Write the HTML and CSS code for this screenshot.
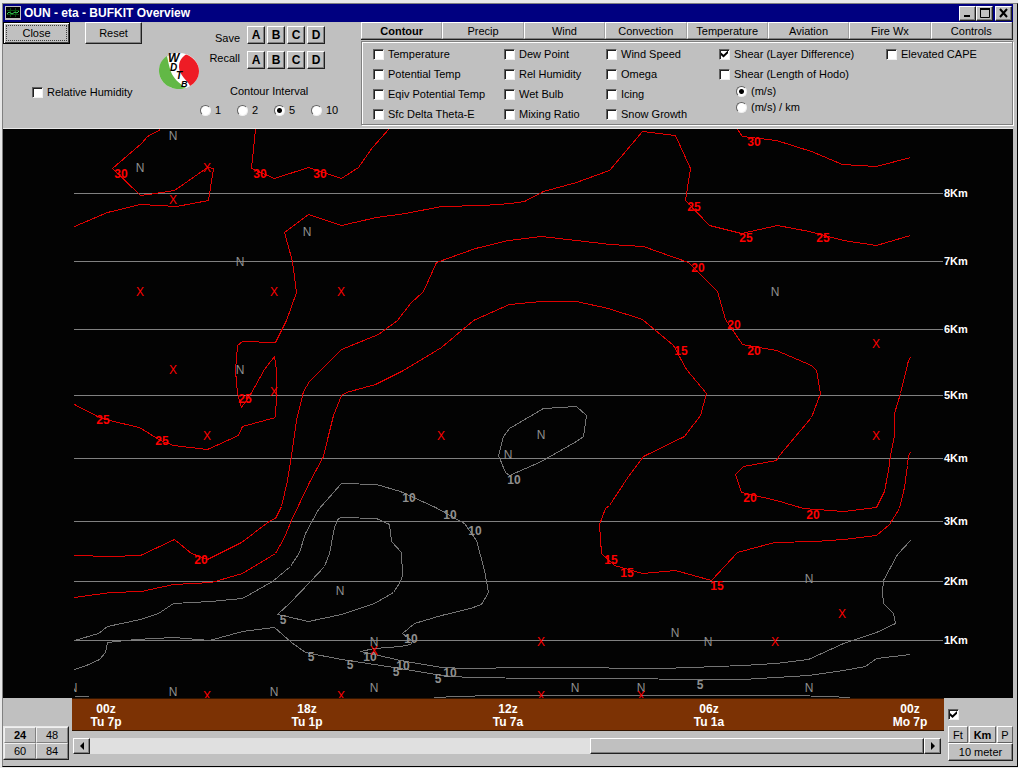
FILE: index.html
```html
<!DOCTYPE html>
<html lang="en">

<head>

  <meta charset="utf-8">

  <title>OUN - eta - BUFKIT Overview</title>

  <link rel="stylesheet" href="styles.css">
</head>

<body>

  <div class="window">
    <header class="titlebar">
      <svg class="app-icon" width="16" height="14" viewBox="0 0 16 14">
        <rect width="16" height="14" fill="#c0c0c0"></rect>
        <rect x="1" y="1" width="14" height="11" fill="#000"></rect>
        <path d="M2 4.5H14M2 8.5H14M5.5 2V11M10.5 2V11" stroke="#064a10" fill="none"></path>
        <path d="M2 8L4 6L7 8L10 6L12 7L14 5" stroke="#3ad45a" fill="none"></path>
      </svg>
      <h1>OUN - eta - BUFKIT Overview</h1>
      <div class="window-buttons">
        <button type="button" aria-label="Minimize">
          <svg width="12" height="10" viewBox="0 0 12 10"><path d="M2 8H8" stroke="#000" stroke-width="2"></path></svg>
        </button>
        <button type="button" aria-label="Maximize">
          <svg width="12" height="10" viewBox="0 0 12 10"><path d="M1.5 1V9.5H10.5V1M1 1H11" stroke="#000" stroke-width="1" fill="none"></path><path d="M1 1H11" stroke="#000" stroke-width="2"></path></svg>
        </button>
        <button type="button" class="close" aria-label="Close window">
          <svg width="12" height="10" viewBox="0 0 12 10"><path d="M2 1L9 9M9 1L2 9" stroke="#000" stroke-width="2"></path></svg>
        </button>
      </div>
    </header>

    <section class="toolbar">
      <div class="actions">
        <div class="main-buttons">
          <button type="button" class="default">Close</button>
          <button type="button">Reset</button>
        </div>
        <label class="humidity"><input type="checkbox"> Relative Humidity</label>
      </div>

      <svg class="logo" width="42" height="38" viewBox="0 0 42 38">
        <ellipse cx="21" cy="19" rx="20" ry="18" fill="#fff"></ellipse>
        <path d="M9 4C3 8 1 13 1 19C1 29 10 37 21 37C24 37 26 36.500 28 36C20 30 16 27 13 20C11 14 10 9 9 4Z" fill="#62b846"></path>
        <path d="M28 2.500C35 5 41 11 41 19C41 26 37 31 32 34C30 29 21 23 21 15C21 9 24 5 28 2.500Z" fill="#ee1c25"></path>
        <text class="logo-w" x="10" y="10">W</text>
        <text class="logo-d" x="12" y="19">D</text>
        <text class="logo-t" x="18" y="27">T</text>
        <text class="logo-b" x="23" y="35">B</text>
      </svg>

      <div class="presets">
        <div class="preset-grid">
          <div class="preset-names">
            <span>Save</span>
            <span>Recall</span>
          </div>
          <div class="letters">
            <button type="button" aria-label="Save A">A</button>
            <button type="button" aria-label="Save B">B</button>
            <button type="button" aria-label="Save C">C</button>
            <button type="button" aria-label="Save D">D</button>
            <button type="button" aria-label="Recall A">A</button>
            <button type="button" aria-label="Recall B">B</button>
            <button type="button" aria-label="Recall C">C</button>
            <button type="button" aria-label="Recall D">D</button>
          </div>
        </div>
        <fieldset class="interval">
          <legend>Contour Interval</legend>
          <div class="interval-options">
            <label><input type="radio" name="interval"> 1</label>
            <label><input type="radio" name="interval"> 2</label>
            <label><input type="radio" name="interval" checked> 5</label>
            <label><input type="radio" name="interval"> 10</label>
          </div>
        </fieldset>
      </div>

      <div class="options">
        <nav class="tabs">
          <button type="button" class="active">Contour</button>
          <button type="button">Precip</button>
          <button type="button">Wind</button>
          <button type="button">Convection</button>
          <button type="button">Temperature</button>
          <button type="button">Aviation</button>
          <button type="button">Fire Wx</button>
          <button type="button">Controls</button>
        </nav>
        <div class="panel">
          <div class="checks">
            <label><input type="checkbox"> Temperature</label>
            <label><input type="checkbox"> Potential Temp</label>
            <label><input type="checkbox"> Eqiv Potential Temp</label>
            <label><input type="checkbox"> Sfc Delta Theta-E</label>
          </div>
          <div class="checks">
            <label><input type="checkbox"> Dew Point</label>
            <label><input type="checkbox"> Rel Humidity</label>
            <label><input type="checkbox"> Wet Bulb</label>
            <label><input type="checkbox"> Mixing Ratio</label>
          </div>
          <div class="checks">
            <label><input type="checkbox"> Wind Speed</label>
            <label><input type="checkbox"> Omega</label>
            <label><input type="checkbox"> Icing</label>
            <label><input type="checkbox"> Snow Growth</label>
          </div>
          <div class="checks">
            <label><input type="checkbox" checked> Shear (Layer Difference)</label>
            <label><input type="checkbox"> Shear (Length of Hodo)</label>
            <div class="units">
              <label><input type="radio" name="shear" checked> (m/s)</label>
              <label><input type="radio" name="shear"> (m/s) / km</label>
            </div>
          </div>
          <div class="checks">
            <label><input type="checkbox"> Elevated CAPE</label>
          </div>
        </div>
      </div>
    </section>

    <svg class="chart" viewBox="3 129 1010 569">
      <defs>
        <clipPath id="plot"><rect x="74" y="129" width="869" height="569"></rect></clipPath>
      </defs>

      <g class="grid">
        <path d="M74 193.500H943M74 261.500H943M74 329.500H943M74 395.500H943M74 458.500H943M74 521.500H943M74 581.500H943M74 640.500H943"></path>
      </g>

      <g class="line weak" transform="translate(0.5 0.5)">
        <polygon points="505,472 498,455 503,436 509,428 543,408 576,406 586,415 583,436 576,441 541,461 509,475"></polygon>
        <polyline points="74,640 98,633 107,626 140,619 158,613 173,603 210,601 242,598 272,581 290,566 299,552 305,533 312,520 318,509 341,483 376,484 400,491 435,507 464,523 476,540 484,570 488,592 481,604 470,608 441,615 414,623 402,633 412,641 410,644 400,646 374,648 360,651 374,654 400,660 441,667 467,668 525,667 592,667 625,668 660,668 691,667 742,665 775,663 808,659 843,643 876,632 895,623 893,613 883,603 882,592 883,580 890,567 897,554 910,540"></polyline>
        <polygon points="277,614 290,602 310,581 324,566 329,553 334,527 338,518 341,517 376,518 389,524 391,541 401,552 402,575 400,581 393,592 374,603 341,614 308,621"></polygon>
        <polyline points="74,669 86,665 99,659 105,652 107,642 135,639 173,637 209,640 242,631 274,627 291,642 305,652 341,659 374,664 400,668 441,675 468,677 540,678 625,678 690,679 742,679 775,677 808,675 843,670 865,666 876,658 910,654"></polyline>
        <polyline points="434,697 458,696 492,695 542,695 690,695 793,695 826,696 850,697"></polyline>
        <polyline points="74,696 88,696"></polyline>
      </g>

      <g class="line strong" transform="translate(0.5 0.5)">
        <polyline points="160,129 147,136 141,143 112,168 140,195 148,194 174,190 207,167 213,168 208,200 176,206 140,204 107,212 74,226"></polyline>
        <polyline points="255,129 251,168 274,178 308,167 341,178 358,167 372,147 381,137 388,129"></polyline>
        <polyline points="74,404 97,416 109,420 139,427 160,440 173,445 207,449 238,435 242,426 275,417 276,395 276,370 274,356 264,369 250,394 241,407 237,393 235,370 237,345 242,341 275,342 286,320 296,292 292,261 284,232 308,214 341,225 376,217 405,213 441,206 483,205 510,203 524,201 543,191 576,182 609,170 642,131 675,135 690,168 685,200 709,225 741,233 777,225 809,231 843,240 876,245 910,235"></polyline>
        <polyline points="737,129 742,136 776,140 811,151 842,164 876,166 910,157"></polyline>
        <polyline points="74,555 110,556 140,555 174,539 191,553 207,559 241,542 270,520 275,518 281,506 287,480 291,455 296,420 303,391 309,381 341,349 378,334 397,320 410,303 423,291 436,262 475,248 508,240 541,236 576,240 610,244 643,246 688,262 717,291 725,319 742,344 776,350 811,365 816,370 820,393 811,417 800,430 779,455 776,460 743,466 735,474 741,492 776,500 803,508 843,511 876,507 884,491 888,470 890,455 894,435 894,413 900,393 908,360 910,357"></polyline>
        <polyline points="74,597 110,592 141,591 173,584 211,582 242,573 275,553 284,537 291,520 309,482 323,456 328,435 333,415 341,395 346,392 375,384 403,370 441,347 473,320 509,304 541,301 576,301 608,308 642,319 673,345 686,369 706,393 700,415 684,436 643,456 628,476 609,505 605,508 599,524 601,553 614,565 642,573 675,570 711,580 737,552 774,542 815,541 843,539 876,535 889,524 899,508 904,487 907,465 908,455 910,452"></polyline>
      </g>

      <g class="label weak-text">
        <text x="514" y="484">10</text>
        <text x="409" y="502">10</text>
        <text x="450" y="519">10</text>
        <text x="475" y="535">10</text>
        <text x="283" y="624">5</text>
        <text x="411" y="643">10</text>
        <text x="311" y="661">5</text>
        <text x="350" y="669">5</text>
        <text x="370" y="661">10</text>
        <text x="403" y="670">10</text>
        <text x="396" y="676">5</text>
        <text x="438" y="683">5</text>
        <text x="450" y="677">10</text>
        <text x="700" y="689">5</text>
      </g>

      <g class="label strong-text">
        <text x="121" y="178">30</text>
        <text x="260" y="178">30</text>
        <text x="320" y="178">30</text>
        <text x="754" y="146">30</text>
        <text x="694" y="211">25</text>
        <text x="746" y="242">25</text>
        <text x="823" y="242">25</text>
        <text x="698" y="272">20</text>
        <text x="734" y="329">20</text>
        <text x="754" y="355">20</text>
        <text x="681" y="355">15</text>
        <text x="245" y="403">25</text>
        <text x="103" y="424">25</text>
        <text x="162" y="445">25</text>
        <text x="201" y="564">20</text>
        <text x="750" y="502">20</text>
        <text x="813" y="519">20</text>
        <text x="611" y="564">15</text>
        <text x="627" y="577">15</text>
        <text x="717" y="590">15</text>
      </g>

      <!-- local minima -->
      <g class="mark weak-text" clip-path="url(#plot)">
        <text x="173" y="140">N</text>
        <text x="140" y="172">N</text>
        <text x="307" y="236">N</text>
        <text x="240" y="266">N</text>
        <text x="240" y="374">N</text>
        <text x="775" y="296">N</text>
        <text x="541" y="439">N</text>
        <text x="508" y="459">N</text>
        <text x="340" y="595">N</text>
        <text x="809" y="583">N</text>
        <text x="374" y="646">N</text>
        <text x="675" y="637">N</text>
        <text x="708" y="646">N</text>
        <text x="73" y="692">N</text>
        <text x="173" y="696">N</text>
        <text x="274" y="696">N</text>
        <text x="374" y="692">N</text>
        <text x="575" y="692">N</text>
        <text x="641" y="692">N</text>
        <text x="809" y="692">N</text>
      </g>

      <!-- local maxima -->
      <g class="mark strong-text" clip-path="url(#plot)">
        <text x="207" y="172">X</text>
        <text x="173" y="204">X</text>
        <text x="140" y="296">X</text>
        <text x="274" y="296">X</text>
        <text x="341" y="296">X</text>
        <text x="173" y="374">X</text>
        <text x="274" y="396">X</text>
        <text x="207" y="440">X</text>
        <text x="441" y="440">X</text>
        <text x="876" y="348">X</text>
        <text x="876" y="440">X</text>
        <text x="842" y="618">X</text>
        <text x="775" y="646">X</text>
        <text x="541" y="646">X</text>
        <text x="374" y="655">X</text>
        <text x="207" y="700">X</text>
        <text x="341" y="700">X</text>
        <text x="541" y="700">X</text>
        <text x="641" y="700">X</text>
      </g>

      <g class="axis">
        <text x="944" y="197">8Km</text>
        <text x="944" y="265">7Km</text>
        <text x="944" y="333">6Km</text>
        <text x="944" y="399">5Km</text>
        <text x="944" y="462">4Km</text>
        <text x="944" y="525">3Km</text>
        <text x="944" y="585">2Km</text>
        <text x="944" y="644">1Km</text>
      </g>
    </svg>

    <footer class="bottom">
      <div class="hours">
        <button type="button" class="active">24</button>
        <button type="button">48</button>
        <button type="button">60</button>
        <button type="button">84</button>
      </div>

      <div class="timeline">
        <div class="times">
          <div>00z<br>Tu 7p</div>
          <div>18z<br>Tu 1p</div>
          <div>12z<br>Tu 7a</div>
          <div>06z<br>Tu 1a</div>
          <div>00z<br>Mo 7p</div>
        </div>
        <div class="scrollbar">
          <button type="button" aria-label="Scroll left">
            <svg width="6" height="8" viewBox="0 0 6 8"><path d="M5 0V8L1 4Z"></path></svg>
          </button>
          <input type="range" min="0" max="100" value="100" aria-label="Time">
          <button type="button" aria-label="Scroll right">
            <svg width="6" height="8" viewBox="0 0 6 8"><path d="M1 0V8L5 4Z"></path></svg>
          </button>
        </div>
      </div>

      <div class="height">
        <input type="checkbox" aria-label="Show height lines" checked>
        <div class="height-units">
          <button type="button">Ft</button>
          <button type="button" class="active">Km</button>
          <button type="button">P</button>
        </div>
        <button type="button" class="meter">10 meter</button>
      </div>
    </footer>
  </div>
</body>

</html>
```
FILE: styles.css
```css
* {
  box-sizing: border-box;
}

body {
  margin: 0;
  padding: 3px 0 1px 2px;
  background: #e8e8e8;
  font: 11px/14px "Liberation Sans", Arial, sans-serif;
  color: #000;
}

.window {
  background: #c0c0c0;
  border-top: 1px solid #808080;
  border-left: 1px solid #808080;
  border-right: 1px solid #000;
  border-bottom: 1px solid #000;
  padding-right: 4px;
}

button {
  display: flex;
  align-items: center;
  justify-content: center;
  margin: 0;
  padding: 0;
  background: #c0c0c0;
  border: 1px solid;
  border-color: #fff #202020 #202020 #fff;
  box-shadow: inset -1px -1px #808080;
  font: inherit;
  color: inherit;
}

button.active {
  font-weight: bold;
}

label {
  display: flex;
  align-items: center;
  gap: 4px;
  white-space: nowrap;
}

input[type="checkbox"],
input[type="radio"] {
  appearance: none;
  flex: none;
  width: 11px;
  height: 11px;
  margin: 0;
  background: #fff;
  border: 1px solid;
  border-color: #606060 #f0f0f0 #f0f0f0 #606060;
}

input[type="checkbox"] {
  box-shadow: inset 1px 1px #202020;
}

input[type="checkbox"]:checked::before {
  content: "";
  display: block;
  width: 7px;
  height: 7px;
  margin: 1px;
  background: #000;
  clip-path: polygon(0 30%, 36% 62%, 100% 0, 100% 38%, 36% 100%, 0 68%);
}

input[type="radio"] {
  border-radius: 50%;
}

input[type="radio"]:checked {
  background: radial-gradient(circle, #000 2px, #fff 3px);
}

/* title bar */

.titlebar {
  display: flex;
  align-items: center;
  height: 18px;
  padding: 0 1px 0 2px;
  gap: 3px;
  background: #000080;
  color: #fff;
}

.titlebar h1 {
  flex: 1;
  margin: 0;
  font-size: 12px;
  line-height: 18px;
}

.window-buttons {
  display: flex;
}

.window-buttons button {
  width: 17px;
  height: 15px;
}

.window-buttons .close {
  margin-left: 2px;
}

/* toolbar */

.toolbar {
  display: grid;
  grid-template-columns: 155px 42px 161px 1fr;
  height: 107px;
  border-bottom: 1px solid #e8e8e8;
}

.main-buttons {
  display: flex;
  gap: 15px;
}

.main-buttons button {
  width: 57px;
  height: 22px;
}

.main-buttons .default {
  width: 67px;
  border-color: #000;
  box-shadow: inset 1px 1px #fff, inset -1px -1px #404040;
  outline: 1px dotted #404040;
  outline-offset: -4px;
}

.humidity {
  margin: 41px 0 0 29px;
}

.logo {
  margin-top: 30px;
}

.logo text {
  font-weight: bold;
  font-style: italic;
}

.logo-w {
  font-size: 12px;
}

.logo-d,
.logo-t {
  font-size: 10px;
}

.logo-b {
  font-size: 9px;
}

.preset-grid {
  display: flex;
  gap: 7px;
  padding: 4px 0 0 8px;
}

.preset-names {
  display: flex;
  flex-direction: column;
  width: 32px;
  padding-top: 2px;
  line-height: 20px;
  text-align: right;
}

.letters {
  display: grid;
  grid-template-columns: repeat(4, 18px);
  gap: 7px 2px;
}

.letters button {
  height: 18px;
  font-size: 12px;
  font-weight: bold;
}

.interval {
  margin: 15px 0 0;
  padding: 0;
  border: 0;
}

.interval legend {
  padding: 0 0 0 30px;
}

.interval-options {
  display: grid;
  grid-template-columns: repeat(4, 37px);
  margin-top: 5px;
}

.tabs {
  display: grid;
  grid-template-columns: repeat(8, 1fr);
  border-bottom: 1px solid #202020;
  border-right: 1px solid #202020;
}

.tabs button {
  height: 17px;
  border-color: #fff #a0a0a0 #808080 #fff;
  box-shadow: none;
}

.panel {
  display: grid;
  grid-template-columns: 131fr 102fr 113fr 167fr 126fr;
  height: 84px;
  margin-top: 1px;
  padding: 5px 0 0 11px;
  border: 1px solid #808080;
  box-shadow: inset 1px 1px #fff, 1px 1px #fff;
}

.checks {
  display: flex;
  flex-direction: column;
  gap: 6px;
}

.units {
  margin: -4px 0 0 17px;
}

.units label {
  height: 16px;
}

/* contour plot */

.chart {
  display: block;
  width: 100%;
  background: #030303;
}

.grid,
.line {
  fill: none;
  stroke-width: 1;
  shape-rendering: crispEdges;
}

.grid {
  stroke: #808080;
}

.weak {
  stroke: #747474;
}

.strong {
  stroke: #e00000;
}

.label {
  font-size: 12px;
  font-weight: bold;
  text-anchor: middle;
}

.mark {
  font-size: 12px;
  text-anchor: middle;
}

.weak-text {
  fill: #909090;
}

.strong-text {
  fill: #ff0000;
}

.axis {
  font-size: 11px;
  font-weight: bold;
  fill: #fff;
}

/* time axis and scrollbar */

.bottom {
  display: grid;
  grid-template-columns: 66px 1fr 66px;
  gap: 3px;
  height: 68px;
}

.hours {
  display: grid;
  grid-template-columns: 1fr 1fr;
  align-self: start;
  margin-top: 28px;
  border: 1px solid;
  border-color: #e8e8e8 #202020 #202020 #e8e8e8;
}

.hours button {
  height: 16px;
  border-color: #f0f0f0 #808080 #808080 #f0f0f0;
  box-shadow: none;
}

.times {
  display: flex;
  justify-content: space-between;
  height: 33px;
  padding: 4px 14px 0;
  background: #7c3204;
  border: 1px solid #301400;
  border-width: 1px 0;
  color: #fff;
  font-size: 12px;
  font-weight: bold;
  line-height: 13px;
  text-align: center;
}

.times div {
  width: 40px;
  white-space: nowrap;
}

.scrollbar {
  display: flex;
  margin: 7px 3px 0 1px;
}

.scrollbar button {
  width: 17px;
  height: 16px;
}

.scrollbar input {
  appearance: none;
  flex: 1;
  min-width: 0;
  height: 16px;
  margin: 0;
  background: #e0e0e0;
}

.scrollbar input::-webkit-slider-thumb {
  appearance: none;
  width: 40%;
  height: 16px;
  background: #c0c0c0;
  border: 1px solid;
  border-color: #fff #202020 #202020 #fff;
  box-shadow: inset -1px -1px #808080;
}

.height {
  display: flex;
  flex-direction: column;
  padding: 11px 0 0 1px;
}

.height-units {
  display: grid;
  grid-template-columns: 20px 1fr 16px;
  gap: 1px;
  margin-top: 6px;
}

.height-units button {
  height: 17px;
  border-color: #fff #606060 #606060 #fff;
  box-shadow: none;
}

.meter {
  height: 18px;
}
```
